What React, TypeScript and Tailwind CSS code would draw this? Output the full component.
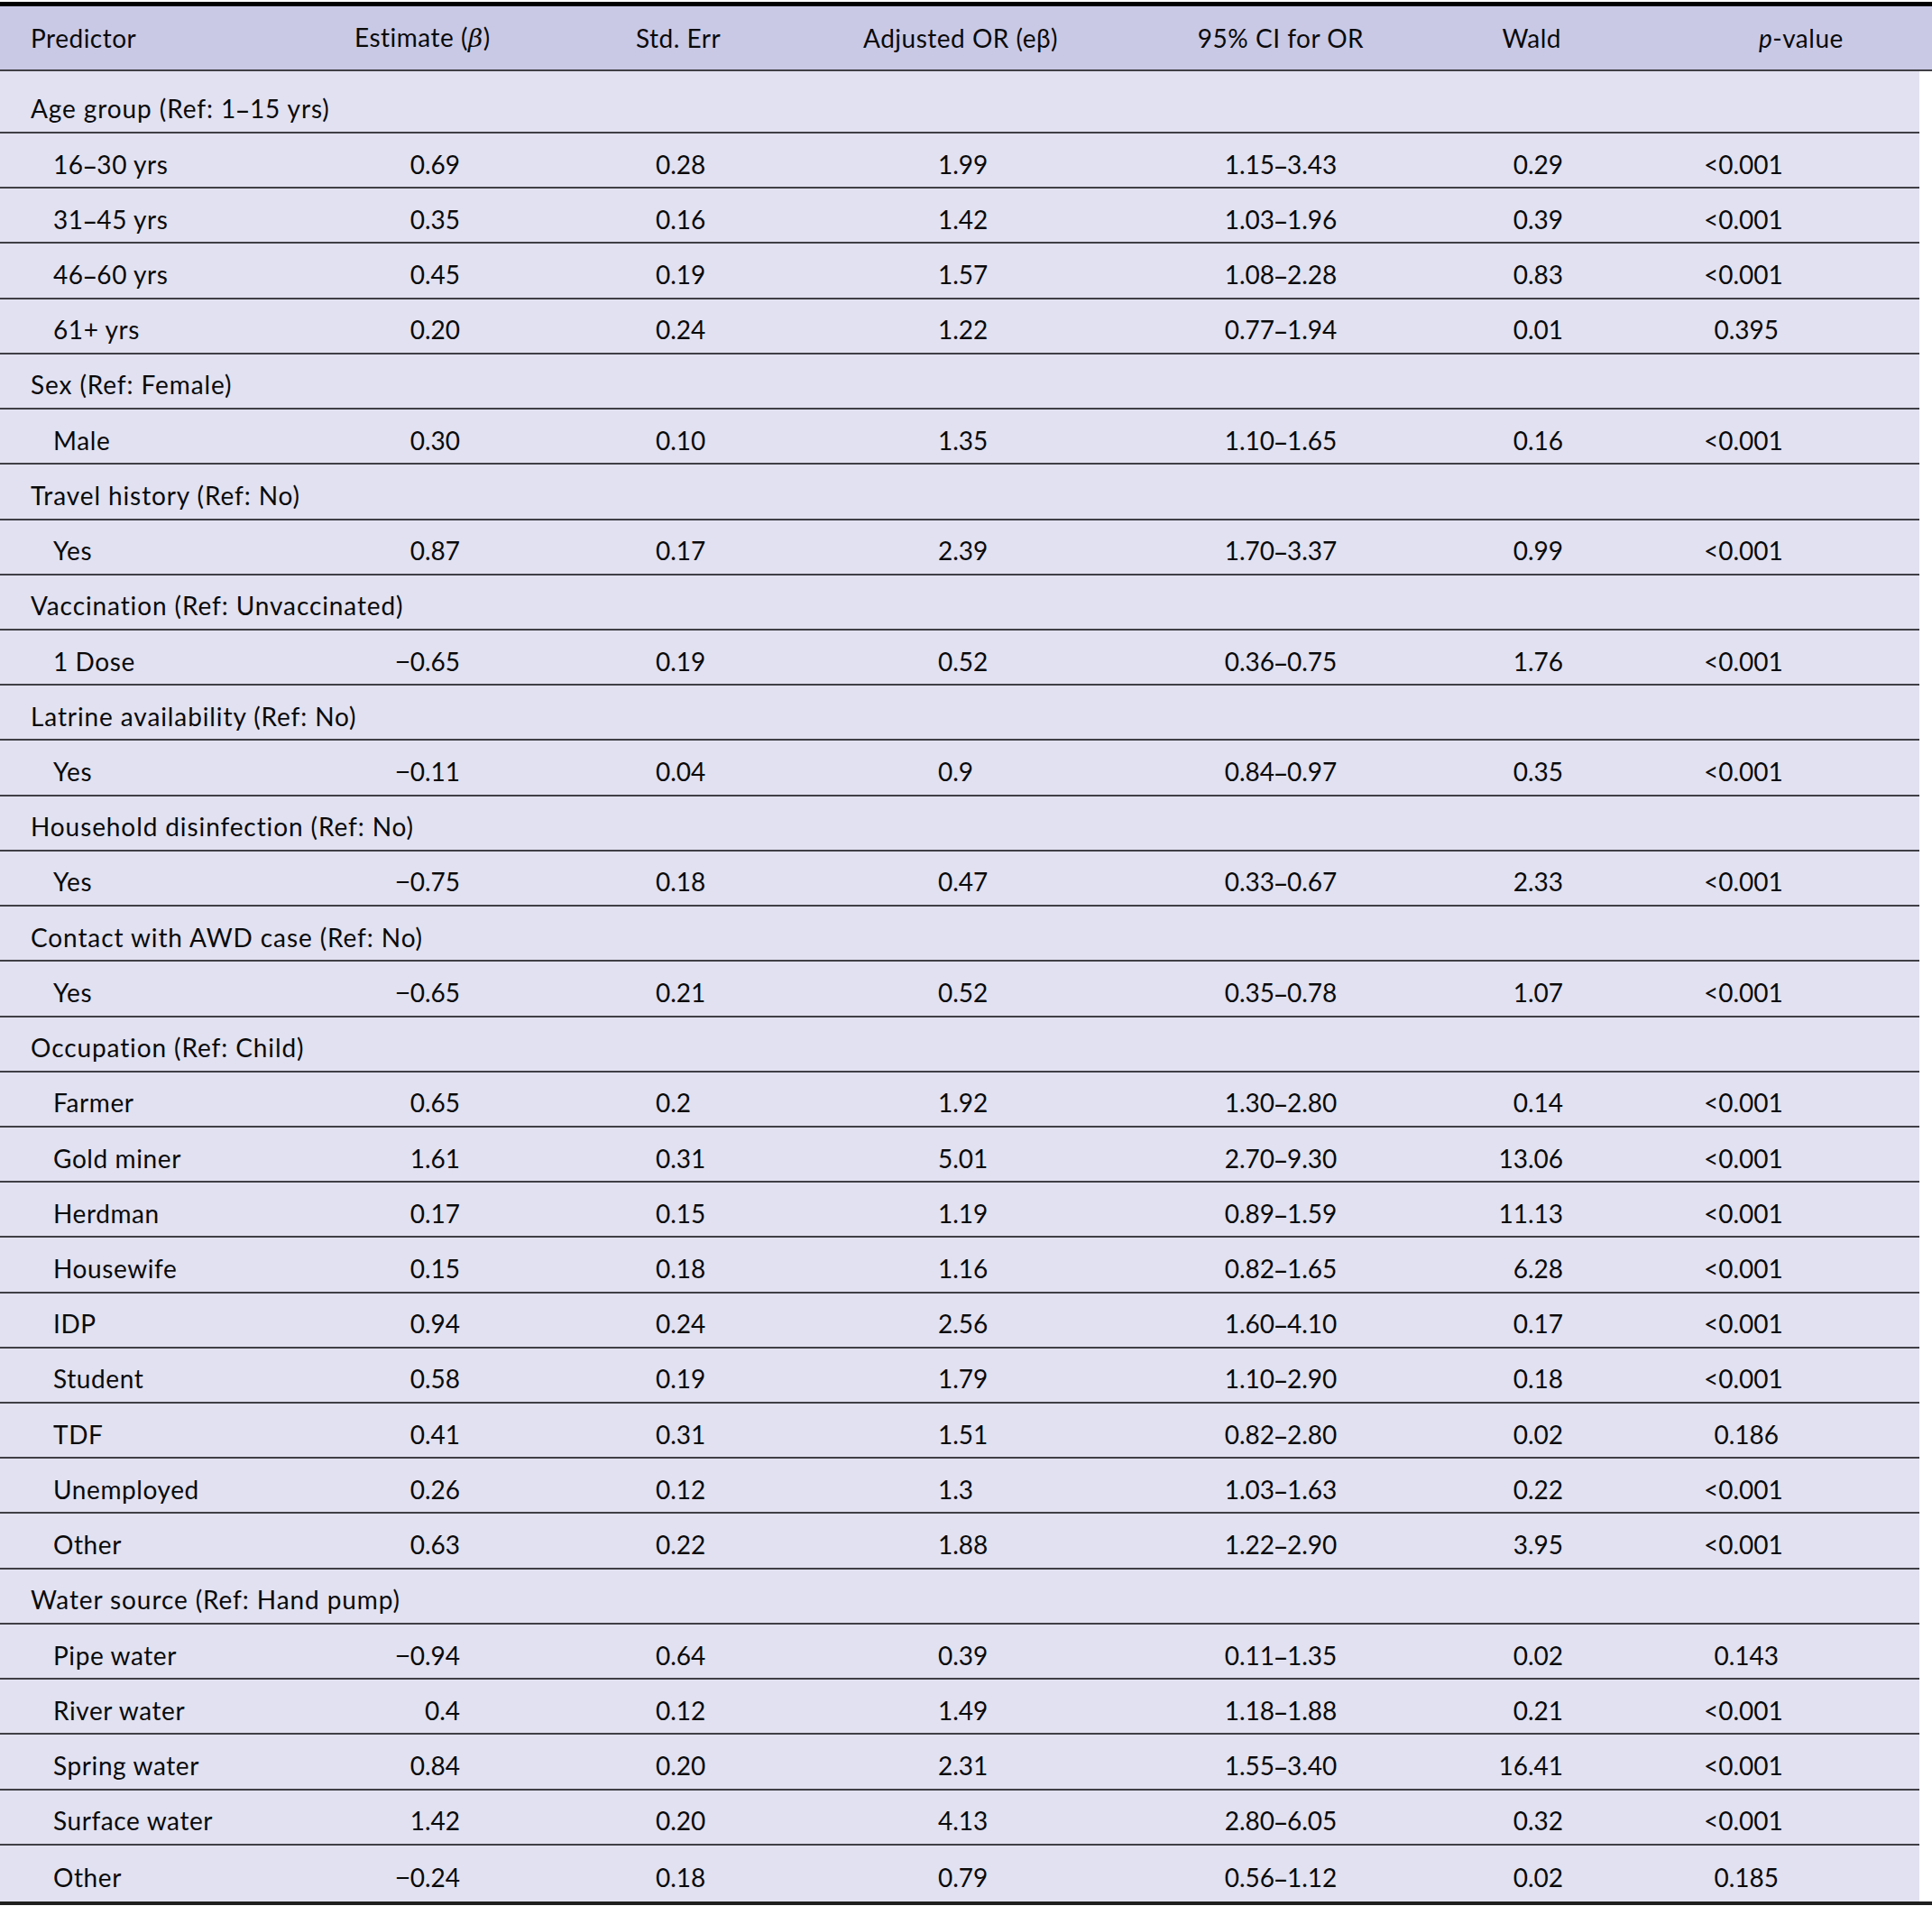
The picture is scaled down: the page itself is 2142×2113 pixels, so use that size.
import React from "react";

type Row = { label: string; group?: boolean; v?: [string, string, string, string, string, string] };

const rows: Row[] = [
  { label: "Age group (Ref: 1–15 yrs)", group: true },
  { label: "16–30 yrs", v: ["0.69", "0.28", "1.99", "1.15–3.43", "0.29", "<0.001"] },
  { label: "31–45 yrs", v: ["0.35", "0.16", "1.42", "1.03–1.96", "0.39", "<0.001"] },
  { label: "46–60 yrs", v: ["0.45", "0.19", "1.57", "1.08–2.28", "0.83", "<0.001"] },
  { label: "61+ yrs", v: ["0.20", "0.24", "1.22", "0.77–1.94", "0.01", "0.395"] },
  { label: "Sex (Ref: Female)", group: true },
  { label: "Male", v: ["0.30", "0.10", "1.35", "1.10–1.65", "0.16", "<0.001"] },
  { label: "Travel history (Ref: No)", group: true },
  { label: "Yes", v: ["0.87", "0.17", "2.39", "1.70–3.37", "0.99", "<0.001"] },
  { label: "Vaccination (Ref: Unvaccinated)", group: true },
  { label: "1 Dose", v: ["−0.65", "0.19", "0.52", "0.36–0.75", "1.76", "<0.001"] },
  { label: "Latrine availability (Ref: No)", group: true },
  { label: "Yes", v: ["−0.11", "0.04", "0.9", "0.84–0.97", "0.35", "<0.001"] },
  { label: "Household disinfection (Ref: No)", group: true },
  { label: "Yes", v: ["−0.75", "0.18", "0.47", "0.33–0.67", "2.33", "<0.001"] },
  { label: "Contact with AWD case (Ref: No)", group: true },
  { label: "Yes", v: ["−0.65", "0.21", "0.52", "0.35–0.78", "1.07", "<0.001"] },
  { label: "Occupation (Ref: Child)", group: true },
  { label: "Farmer", v: ["0.65", "0.2", "1.92", "1.30–2.80", "0.14", "<0.001"] },
  { label: "Gold miner", v: ["1.61", "0.31", "5.01", "2.70–9.30", "13.06", "<0.001"] },
  { label: "Herdman", v: ["0.17", "0.15", "1.19", "0.89–1.59", "11.13", "<0.001"] },
  { label: "Housewife", v: ["0.15", "0.18", "1.16", "0.82–1.65", "6.28", "<0.001"] },
  { label: "IDP", v: ["0.94", "0.24", "2.56", "1.60–4.10", "0.17", "<0.001"] },
  { label: "Student", v: ["0.58", "0.19", "1.79", "1.10–2.90", "0.18", "<0.001"] },
  { label: "TDF", v: ["0.41", "0.31", "1.51", "0.82–2.80", "0.02", "0.186"] },
  { label: "Unemployed", v: ["0.26", "0.12", "1.3", "1.03–1.63", "0.22", "<0.001"] },
  { label: "Other", v: ["0.63", "0.22", "1.88", "1.22–2.90", "3.95", "<0.001"] },
  { label: "Water source (Ref: Hand pump)", group: true },
  { label: "Pipe water", v: ["−0.94", "0.64", "0.39", "0.11–1.35", "0.02", "0.143"] },
  { label: "River water", v: ["0.4", "0.12", "1.49", "1.18–1.88", "0.21", "<0.001"] },
  { label: "Spring water", v: ["0.84", "0.20", "2.31", "1.55–3.40", "16.41", "<0.001"] },
  { label: "Surface water", v: ["1.42", "0.20", "4.13", "2.80–6.05", "0.32", "<0.001"] },
  { label: "Other", v: ["−0.24", "0.18", "0.79", "0.56–1.12", "0.02", "0.185"] },
];

const font = { fontFamily: "Lato, 'Noto Sans', sans-serif" };

function T({ s }: { s: string }) {
  const parts = s.split(/([–−])/);
  return (
    <>
      {parts.map((p, i) =>
        p === "–" || p === "−" ? (
          <span key={i} className="font-['Noto_Sans']">
            {p}
          </span>
        ) : (
          <React.Fragment key={i}>{p}</React.Fragment>
        )
      )}
    </>
  );
}

export default function App() {
  const last = rows.length - 1;
  return (
    <div className="w-[2142px] h-[2113px] bg-white text-[#0a0a0a] text-[28px] leading-none" style={font}>
      <div className="h-[2px]" />
      <div className="h-[5px] bg-black" />
      {/* header */}
      <div className="grid grid-cols-[390px_314px_252px_294px_340px_299px_253px] h-[72px] bg-[#c9c9e6] border-b-2 border-[#3f3f46] items-center tracking-[0.5px]">
        <div className="pl-[34px]">Predictor</div>
        <div className="pl-[3px]">
          Estimate (<span className="italic font-['DejaVu_Serif'] text-[28px]">β</span>)
        </div>
        <div className="pl-[1px]">Std. Err</div>
        <div className="pl-[1px]">Adjusted OR (eβ)</div>
        <div className="text-center">95% CI for OR</div>
        <div className="text-right pr-[158px]">Wald</div>
        <div className="pl-[61px]">
          <span className="italic">p</span>-value
        </div>
      </div>
      {/* body */}
      <div className="w-[2128px] bg-[#e1e1f1]">
        {rows.map((r, i) => {
          const h =
            i === 0
              ? "h-[69px] pt-[14px] border-b-2"
              : i === last
              ? "h-[62px] pt-[8px]"
              : "h-[61.23px] pt-[8px] border-b-2";
          return (
            <div
              key={i}
              className={`grid grid-cols-[390px_314px_252px_294px_340px_299px_239px] items-center border-[#3f3f46] ${h}`}
            >
              <div
                className={
                  r.group
                    ? "pl-[34px] whitespace-nowrap tracking-[0.9px]"
                    : "pl-[59px] whitespace-nowrap tracking-[0.6px]"
                }
              >
                <T s={r.label} />
              </div>
              {r.v ? (
                <>
                  <div className="text-right pr-[194px]"><T s={r.v[0]} /></div>
                  <div className="pl-[23px]">{r.v[1]}</div>
                  <div className="pl-[84px]">{r.v[2]}</div>
                  <div className="text-center"><T s={r.v[3]} /></div>
                  <div className="text-right pr-[156px]">{r.v[4]}</div>
                  <div className="text-right pr-[156px]">{r.v[5]}</div>
                </>
              ) : (
                <>
                  <div />
                  <div />
                  <div />
                  <div />
                  <div />
                  <div />
                </>
              )}
            </div>
          );
        })}
      </div>
      <div className="h-[4px] bg-[#1f1f1f]" />
    </div>
  );
}
